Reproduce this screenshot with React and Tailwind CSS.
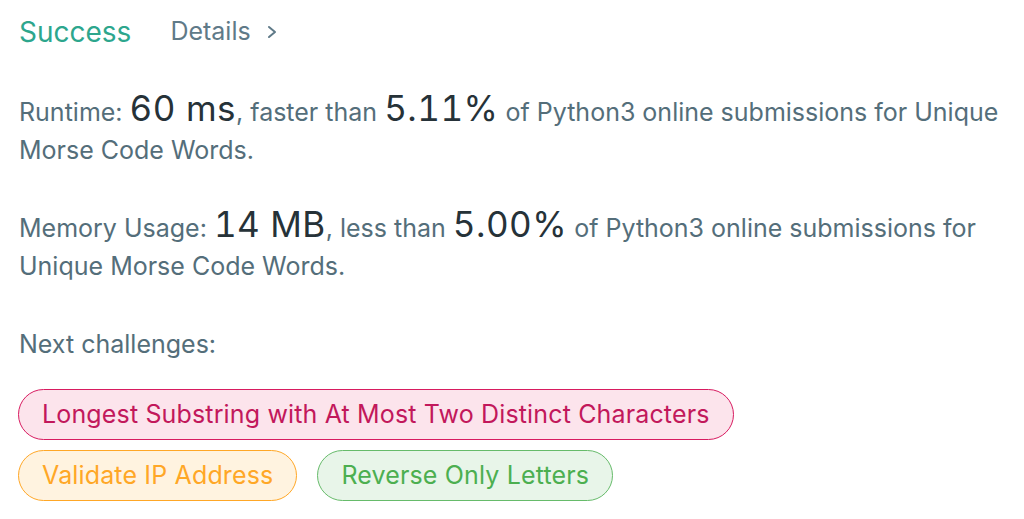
import React from 'react';

const Pill = ({ children, className }) => (
    <span className={`inline-flex items-center h-[51px] px-[23px] rounded-full border-[1.5px] text-[25px] tracking-[0.15px] ${className}`}>
        {children}
    </span>
);

const Big = ({ children }) => (
    <span className="text-[35px] leading-[38px] text-[#263238] tracking-[0.5px] tabular-nums">{children}</span>
);

const App = () => {
    return (
        <div className="w-[1024px] h-[519px] bg-white overflow-hidden pl-[18px] pt-[12px] font-['Inter',sans-serif] text-[#546e7a]">
            <div className="flex items-center h-[40px]">
                <span className="ml-[1px] text-[28px] text-[#2da68d]">Success</span>
                <span className="ml-[39px] text-[25px] text-[#5f7a88] flex items-center">
                    Details
                    <svg width="12" height="14" viewBox="0 0 12 14" className="ml-[15px]">
                        <path d="M3 2 L9 7 L3 12" fill="none" stroke="#5f7a88" strokeWidth="2" strokeLinecap="round" strokeLinejoin="round" />
                    </svg>
                </span>
            </div>

            <p className="mt-[37px] ml-[1px] text-[25px] leading-[38px] pr-[10px]">
                Runtime: <Big>60 ms</Big>, faster than <Big>5.11%</Big> of Python3 online submissions for Unique Morse Code Words.
            </p>

            <p className="mt-[36px] ml-[1px] text-[25px] leading-[38px] pr-[10px]">
                Memory Usage: <Big>14 MB</Big>, less than <Big>5.00%</Big> of Python3 online submissions for Unique Morse Code Words.
            </p>

            <p className="mt-[40px] ml-[1px] text-[25px] leading-[38px]">Next challenges:</p>

            <div className="mt-[26px] flex flex-wrap gap-x-[20px] gap-y-[10px] w-[800px]">
                <Pill className="border-[#d81b60] bg-[#fce4ec] text-[#c2185b]">Longest Substring with At Most Two Distinct Characters</Pill>
                <Pill className="border-[#ffa726] bg-[#fff3e0] text-[#ffa726]">Validate IP Address</Pill>
                <Pill className="border-[#66bb6a] bg-[#e8f5e9] text-[#4caf50]">Reverse Only Letters</Pill>
            </div>
        </div>
    );
};

export default App;
